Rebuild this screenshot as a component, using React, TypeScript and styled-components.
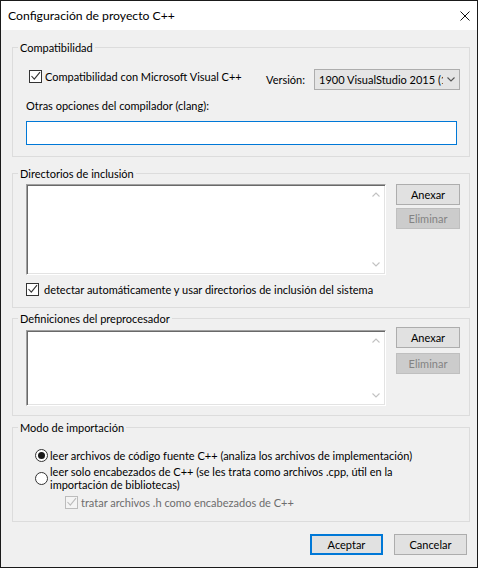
import React from "react";
import styled, { createGlobalStyle } from "styled-components";

const FONT = `Lato, "Liberation Sans", sans-serif`;

const GlobalStyle = createGlobalStyle`
  html, body { margin: 0; padding: 0; background: #f0f0f0; }
  body { font-family: ${FONT}; font-size: 11px; color: #000; }
  * { box-sizing: border-box; }
`;

const Window = styled.div`
  width: 478px;
  height: 568px;
  border: 1px solid #1a1a1a;
  background: #f0f0f0;
  display: flex;
  flex-direction: column;
  font-family: ${FONT};
  font-size: 11px;
  line-height: 13px;
  color: #000;
`;

const TitleBar = styled.div`
  flex: none;
  height: 29px;
  background: #fff;
  display: flex;
  align-items: center;
  justify-content: space-between;
  padding: 0 7px 0 7px;
`;

const Title = styled.span`
  font-size: 12.2px;
  line-height: 15px;
`;

const Body = styled.div`
  flex: 1;
  display: flex;
  flex-direction: column;
  padding: 0 7px 0 11px;
`;

const Group = styled.fieldset<{ $top: number }>`
  margin: ${(p) => p.$top}px 0 0;
  padding: 0;
  border: 1px solid #dcdcdc;
  min-width: 0;
`;

const Legend = styled.legend`
  margin-left: 5px;
  padding: 0 2px;
  font-size: 11px;
  line-height: 15px;
`;

const GroupBody = styled.div<{ $pad: string }>`
  display: flex;
  flex-direction: column;
  padding: ${(p) => p.$pad};
`;

const Row = styled.div<{ $mt?: number; $align?: string }>`
  display: flex;
  align-items: ${(p) => p.$align ?? "center"};
  margin-top: ${(p) => p.$mt ?? 0}px;
`;

const Spacer = styled.div`
  flex: 1;
`;

const CheckLabel = styled.label<{ $ml?: number; $gap?: number; $mt?: number; $disabled?: boolean }>`
  display: flex;
  align-items: center;
  gap: ${(p) => p.$gap ?? 3}px;
  margin-left: ${(p) => p.$ml ?? 0}px;
  margin-top: ${(p) => p.$mt ?? 0}px;
  color: ${(p) => (p.$disabled ? "#6d6d6d" : "#000")};
  line-height: 13px;
  white-space: nowrap;
`;

const Box = styled.span<{ $disabled?: boolean }>`
  flex: none;
  width: 13px;
  height: 13px;
  border: 1px solid ${(p) => (p.$disabled ? "#bcbcbc" : "#333")};
  background: ${(p) => (p.$disabled ? "#f4f4f4" : "#fff")};
  display: flex;
  align-items: center;
  justify-content: center;
`;

const RadioCircle = styled.span`
  flex: none;
  width: 13px;
  height: 13px;
  border: 1px solid #333;
  border-radius: 50%;
  background: #fff;
  display: flex;
  align-items: center;
  justify-content: center;
`;

const RadioDot = styled.span`
  width: 7px;
  height: 7px;
  border-radius: 50%;
  background: #1a1a1a;
`;

const RadioText = styled.span`
  line-height: 13px;
`;

const FieldLabel = styled.div<{ $mt?: number }>`
  margin-top: ${(p) => p.$mt ?? 0}px;
  line-height: 13px;
`;

const VersionLabel = styled.span`
  align-self: center;
  margin-right: 9px;
`;

const Select = styled.div`
  flex: none;
  width: 146px;
  height: 21px;
  border: 1px solid #adadad;
  background: #e5e5e5;
  display: flex;
  align-items: center;
  padding-left: 4px;
`;

const SelectText = styled.span`
  flex: 1;
  overflow: hidden;
  white-space: nowrap;
`;

const SelectArrow = styled.span`
  flex: none;
  width: 16px;
  display: flex;
  justify-content: center;
  align-items: center;
`;

const TextInput = styled.input`
  display: block;
  width: calc(100% - 3px);
  height: 24px;
  margin: 9px 0 0;
  padding: 0 3px;
  border: 1px solid #0078d7;
  background: #fff;
  font: inherit;
  outline: none;
`;

const ListBox = styled.div<{ $h: number; $mt?: number }>`
  flex: none;
  width: 360px;
  height: ${(p) => p.$h}px;
  margin-top: ${(p) => p.$mt ?? 0}px;
  background: #fff;
  border-style: solid;
  border-width: 1px;
  border-color: #a0a0a0 #fff #fff #a0a0a0;
  box-shadow: inset 1px 1px 0 #696969, inset -1px -1px 0 #e3e3e3;
  padding: 1px;
  display: flex;
  justify-content: flex-end;
`;

const ScrollTrack = styled.div`
  width: 17px;
  display: flex;
  flex-direction: column;
  justify-content: space-between;
`;

const ScrollArrow = styled.div`
  height: 17px;
  display: flex;
  align-items: center;
  justify-content: center;
`;

const ButtonCol = styled.div<{ $gap: number }>`
  margin-left: 10px;
  display: flex;
  flex-direction: column;
  gap: ${(p) => p.$gap}px;
`;

const Btn = styled.button<{ $w?: number; $primary?: boolean }>`
  width: ${(p) => p.$w ?? 64}px;
  height: 21px;
  padding: 0;
  margin: 0;
  border: ${(p) => (p.$primary ? "2px solid #0078d7" : "1px solid #adadad")};
  background: #e1e1e1;
  color: #000;
  font-family: ${FONT};
  font-size: 11px;
  line-height: 13px;
  display: flex;
  align-items: center;
  justify-content: center;
  &:disabled {
    background: #cccccc;
    border-color: #bfbfbf;
    color: #838383;
  }
`;

const Footer = styled.div`
  display: flex;
  justify-content: flex-end;
  gap: 11px;
  margin-top: 12px;
  padding-right: 3px;
`;

const CheckMark = ({ color }: { color: string }) => (
  <svg width="11" height="11" viewBox="0 0 11 11">
    <polyline points="1.5,5 4.3,8.2 10,1.2" fill="none" stroke={color} strokeWidth="1.1" />
  </svg>
);

const Checkbox = ({
  label,
  ml,
  gap,
  mt,
  disabled,
}: {
  label: string;
  ml?: number;
  gap?: number;
  mt?: number;
  disabled?: boolean;
}) => (
  <CheckLabel $ml={ml} $gap={gap} $mt={mt} $disabled={disabled}>
    <Box $disabled={disabled}>
      <CheckMark color={disabled ? "#bcbcbc" : "#333"} />
    </Box>
    <span>{label}</span>
  </CheckLabel>
);

const Chevron = ({ up, color }: { up?: boolean; color: string }) => (
  <svg width="8" height="5" viewBox="0 0 8 5">
    <polyline
      points={up ? "0.5,4.5 4,1 7.5,4.5" : "0.5,0.5 4,4 7.5,0.5"}
      fill="none"
      stroke={color}
      strokeWidth="1.1"
    />
  </svg>
);

const List = ({ h, mt }: { h: number; mt?: number }) => (
  <ListBox $h={h} $mt={mt}>
    <ScrollTrack>
      <ScrollArrow>
        <Chevron up color="#c2c2c2" />
      </ScrollArrow>
      <ScrollArrow>
        <Chevron color="#c2c2c2" />
      </ScrollArrow>
    </ScrollTrack>
  </ListBox>
);

export default function App() {
  return (
    <>
      <GlobalStyle />
      <Window>
        <TitleBar>
          <Title>Configuración de proyecto C++</Title>
          <svg width="10" height="10" viewBox="0 0 10 10">
            <path d="M0.5 0.5 L9.5 9.5 M9.5 0.5 L0.5 9.5" stroke="#111" strokeWidth="1" fill="none" />
          </svg>
        </TitleBar>
        <Body>
          <Group $top={10}>
            <Legend>Compatibilidad</Legend>
            <GroupBody $pad="14px 9px 11px 13px">
              <Row $align="flex-start">
                <Checkbox label="Compatibilidad con Microsoft Visual C++" ml={3} gap={3} mt={1} />
                <Spacer />
                <VersionLabel>Versión:</VersionLabel>
                <Select>
                  <SelectText>1900 VisualStudio 2015 (14.0)</SelectText>
                  <SelectArrow>
                    <Chevron color="#555" />
                  </SelectArrow>
                </Select>
              </Row>
              <FieldLabel $mt={9}>Otras opciones del compilador (clang):</FieldLabel>
              <TextInput type="text" defaultValue="" />
            </GroupBody>
          </Group>

          <Group $top={9}>
            <Legend>Directorios de inclusión</Legend>
            <GroupBody $pad="3px 9px 11px 13px">
              <Row $align="flex-start">
                <List h={91} />
                <ButtonCol $gap={3}>
                  <Btn>Anexar</Btn>
                  <Btn disabled>Eliminar</Btn>
                </ButtonCol>
              </Row>
              <Checkbox
                label="detectar automáticamente y usar directorios de inclusión del sistema"
                gap={5}
                mt={8}
              />
            </GroupBody>
          </Group>

          <Group $top={3}>
            <Legend>Definiciones del preprocesador</Legend>
            <GroupBody $pad="1px 9px 9px 13px">
              <Row $align="flex-start">
                <List h={76} mt={3} />
                <ButtonCol $gap={5}>
                  <Btn>Anexar</Btn>
                  <Btn disabled>Eliminar</Btn>
                </ButtonCol>
              </Row>
            </GroupBody>
          </Group>

          <Group $top={4}>
            <Legend>Modo de importación</Legend>
            <GroupBody $pad="14px 9px 12px 13px">
              <CheckLabel $ml={9} $gap={2}>
                <RadioCircle>
                  <RadioDot />
                </RadioCircle>
                <RadioText>leer archivos de código fuente C++ (analiza los archivos de implementación)</RadioText>
              </CheckLabel>
              <CheckLabel $ml={9} $gap={2} $mt={3}>
                <RadioCircle />
                <RadioText>
                  leer solo encabezados de C++ (se les trata como archivos .cpp, útil en la
                  <br />
                  importación de bibliotecas)
                </RadioText>
              </CheckLabel>
              <Checkbox label="tratar archivos .h como encabezados de C++" ml={39} gap={3} mt={5} disabled />
            </GroupBody>
          </Group>

          <Footer>
            <Btn $w={73} $primary>
              Aceptar
            </Btn>
            <Btn $w={73}>Cancelar</Btn>
          </Footer>
        </Body>
      </Window>
    </>
  );
}
